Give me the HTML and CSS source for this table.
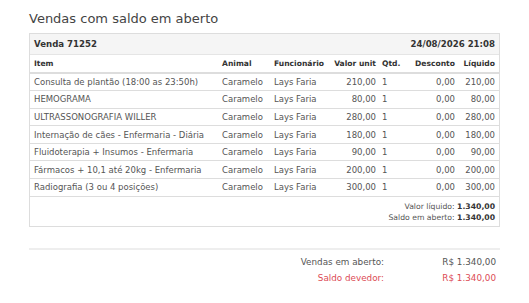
FILE: index.html
```html
<!DOCTYPE html>
<html lang="pt-BR">
<head>
<meta charset="utf-8">
<link rel="stylesheet" href="styles.css">
</head>
<body>
<div class="page">
  <h1 class="title">Vendas com saldo em aberto</h1>
  <div class="panel">
    <div class="panel-heading">
      <span>Venda 71252</span>
      <span>24/08/2026 21:08</span>
    </div>
    <table class="items">
      <thead>
        <tr>
          <th class="c-item">Item</th>
          <th class="c-animal">Animal</th>
          <th class="c-func">Funcionário</th>
          <th class="num c-unit">Valor unit</th>
          <th class="c-qtd">Qtd.</th>
          <th class="num c-desc">Desconto</th>
          <th class="num c-liq">Líquido</th>
        </tr>
      </thead>
      <tbody>
        <tr><td>Consulta de plantão (18:00 as 23:50h)</td><td>Caramelo</td><td>Lays Faria</td><td class="num">210,00</td><td>1</td><td class="num">0,00</td><td class="num">210,00</td></tr>
        <tr><td>HEMOGRAMA</td><td>Caramelo</td><td>Lays Faria</td><td class="num">80,00</td><td>1</td><td class="num">0,00</td><td class="num">80,00</td></tr>
        <tr><td>ULTRASSONOGRAFIA WILLER</td><td>Caramelo</td><td>Lays Faria</td><td class="num">280,00</td><td>1</td><td class="num">0,00</td><td class="num">280,00</td></tr>
        <tr><td>Internação de cães - Enfermaria - Diária</td><td>Caramelo</td><td>Lays Faria</td><td class="num">180,00</td><td>1</td><td class="num">0,00</td><td class="num">180,00</td></tr>
        <tr><td>Fluidoterapia + Insumos - Enfermaria</td><td>Caramelo</td><td>Lays Faria</td><td class="num">90,00</td><td>1</td><td class="num">0,00</td><td class="num">90,00</td></tr>
        <tr><td>Fármacos + 10,1 até 20kg - Enfermaria</td><td>Caramelo</td><td>Lays Faria</td><td class="num">200,00</td><td>1</td><td class="num">0,00</td><td class="num">200,00</td></tr>
        <tr><td>Radiografia (3 ou 4 posições)</td><td>Caramelo</td><td>Lays Faria</td><td class="num">300,00</td><td>1</td><td class="num">0,00</td><td class="num">300,00</td></tr>
      </tbody>
    </table>
    <div class="panel-footer">
      <div>Valor líquido: <b>1.340,00</b></div>
      <div>Saldo em aberto: <b>1.340,00</b></div>
    </div>
  </div>
  <hr class="sep">
  <div class="summary">
    <div class="sum-row"><span class="sum-label">Vendas em aberto:</span><span class="sum-value">R$ 1.340,00</span></div>
    <div class="sum-row danger"><span class="sum-label">Saldo devedor:</span><span class="sum-value">R$ 1.340,00</span></div>
  </div>
</div>
</body>
</html>
```

FILE: styles.css
```css
* { box-sizing: border-box; }
html, body { margin: 0; padding: 0; background: #fff; }
body {
  font-family: "DejaVu Sans", "Liberation Sans", sans-serif;
  color: #555;
}
.page {
  padding: 10px 29px 0 29px;
  width: 529px;
}
.title {
  margin: 0 0 5px 0;
  font-size: 13px;
  font-weight: normal;
  color: #444;
  line-height: 18px;
}
.panel {
  border: 1px solid #ddd;
  width: 471px;
}
.panel-heading {
  display: flex;
  justify-content: space-between;
  align-items: center;
  height: 21px;
  padding: 0 4px;
  background: #f5f5f5;
  border-bottom: 1px solid #e5e5e5;
  font-weight: bold;
  font-size: 8.6px;
  color: #333;
}
.items {
  width: 100%;
  border-collapse: collapse;
  font-size: 8.5px;
}
.items th {
  font-weight: bold;
  font-size: 7.6px;
  color: #333;
  text-align: left;
  height: 18px;
  padding: 0 3px;
  border-bottom: 2px solid #ddd;
}
.items td {
  height: 17.6px;
  padding: 0 3px;
  border-bottom: 1px solid #ddd;
  white-space: nowrap;
}
.items th:first-child, .items td:first-child { padding-left: 4px; }
.items th:last-child, .items td:last-child { padding-right: 4px; }
.items .num { text-align: right; }
.c-item { width: 189px; }
.c-animal { width: 52px; }
.c-func { width: 60px; }
.c-unit { width: 48px; }
.c-qtd { width: 33px; }
.c-desc { width: 43px; }
.panel-footer {
  text-align: right;
  padding: 4px 4px 3px 0;
  font-size: 7.7px;
  line-height: 11px;
  color: #555;
}
.panel-footer b { color: #333; }
.sep {
  margin: 21px 0 0 0;
  border: 0;
  border-top: 2px solid #eee;
  width: 471px;
}
.summary {
  padding-top: 4px;
  font-size: 8.8px;
  color: #555;
}
.sum-row {
  display: grid;
  grid-template-columns: 355px 112px;
  height: 16px;
  align-items: center;
}
.sum-label { text-align: right; }
.sum-value { text-align: right; }
.danger { color: #dc4b55; }
```
